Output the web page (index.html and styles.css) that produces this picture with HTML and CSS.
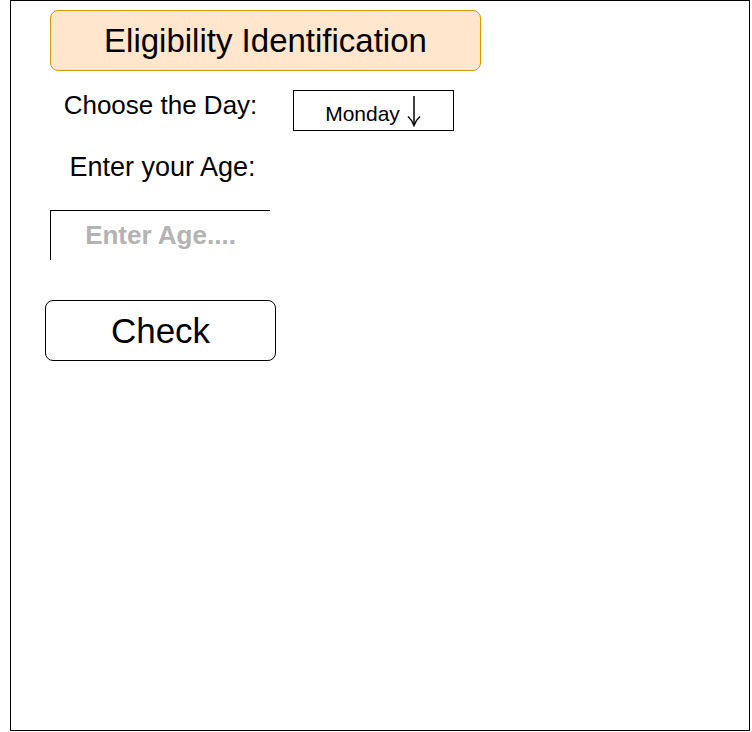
FILE: index.html
```html
<!DOCTYPE html>
<html lang="en">
<head>
<meta charset="utf-8">
<title>Eligibility Identification</title>
<link rel="stylesheet" href="styles.css">
</head>
<body>
<div class="frame">
  <div class="title">Eligibility Identification</div>
  <div class="row">
    <div class="label label-day">Choose the Day:</div>
    <div class="select">
      <span class="select-text">Monday</span>
      <svg class="arrow" width="16" height="32" viewBox="0 0 16 32" aria-hidden="true">
        <line x1="8" y1="1" x2="8" y2="30" stroke="#000" stroke-width="1.5"/>
        <path d="M2 21.5 Q6 25 8 30.5 Q10 25 14 21.5" fill="none" stroke="#000" stroke-width="1.5"/>
      </svg>
    </div>
  </div>
  <div class="label label-age">Enter your Age:</div>
  <div class="age-input">Enter Age....</div>
  <div class="check">Check</div>
</div>
</body>
</html>
```
FILE: styles.css
```css
* { box-sizing: border-box; }
html, body { margin: 0; padding: 0; background: #fff; }
body { font-family: "Liberation Sans", Arial, Helvetica, sans-serif; color: #000; }

.frame {
  margin-left: 10px;
  width: 740px;
  height: 731px;
  border: 1px solid #000;
  padding: 9px 0 0 39px;
}

.title {
  width: 431px;
  height: 61px;
  border: 1px solid #d79b00;
  background: #ffe6cc;
  border-radius: 8px;
  font-size: 33px;
  display: flex;
  align-items: center;
  justify-content: center;
  padding-top: 1px;
}

.row {
  display: flex;
  align-items: flex-start;
  margin-top: 19px;
  height: 40px;
}

.label {
  width: 220px;
  text-align: center;
  line-height: 30px;
}

.label-day { font-size: 26px; padding-left: 1px; }

.label-age { margin-top: 22px; font-size: 27px; padding-left: 5px; }

.select {
  margin-left: 23px;
  width: 161px;
  height: 41px;
  border: 1px solid #000;
  display: flex;
  align-items: center;
  justify-content: center;
  gap: 6px;
  padding-top: 6px;
}

.select-text { font-size: 21px; }

.arrow { display: block; margin-top: -5px; }

.age-input {
  margin-top: 28px;
  width: 220px;
  height: 50px;
  border-top: 1px solid #000;
  border-left: 1px solid #000;
  display: flex;
  align-items: center;
  justify-content: center;
  font-size: 26px;
  font-weight: bold;
  color: #b3b3b3;
}

.check {
  margin-top: 40px;
  margin-left: -5px;
  width: 231px;
  height: 61px;
  border: 1px solid #000;
  border-radius: 8px;
  display: flex;
  align-items: center;
  justify-content: center;
  font-size: 35px;
}
```
